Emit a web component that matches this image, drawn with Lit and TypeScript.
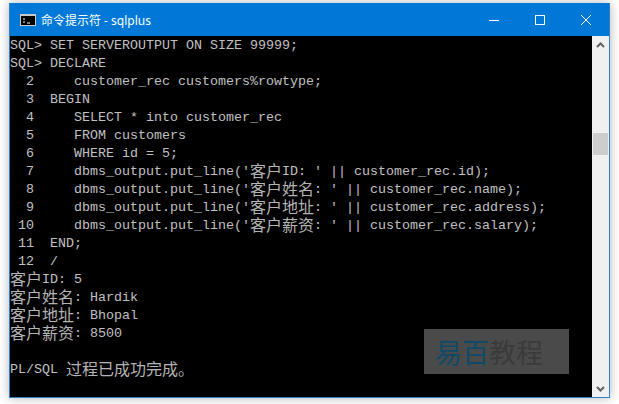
import { LitElement, html, css } from "lit";
import { customElement } from "lit/decorators.js";

const LINES = [
  "SQL> SET SERVEROUTPUT ON SIZE 99999;",
  "SQL> DECLARE",
  "  2     customer_rec customers%rowtype;",
  "  3  BEGIN",
  "  4     SELECT * into customer_rec",
  "  5     FROM customers",
  "  6     WHERE id = 5;",
  "  7     dbms_output.put_line('客户ID: ' || customer_rec.id);",
  "  8     dbms_output.put_line('客户姓名: ' || customer_rec.name);",
  "  9     dbms_output.put_line('客户地址: ' || customer_rec.address);",
  " 10     dbms_output.put_line('客户薪资: ' || customer_rec.salary);",
  " 11  END;",
  " 12  /",
  "客户ID: 5",
  "客户姓名: Hardik",
  "客户地址: Bhopal",
  "客户薪资: 8500",
  "",
  "PL/SQL 过程已成功完成。",
];

@customElement("app-root")
export class AppRoot extends LitElement {
  static styles = css`
    :host {
      display: block;
      width: 619px;
      height: 404px;
      background: #fff;
      overflow: hidden;
      padding: 3px 9px 6px;
      box-sizing: border-box;
    }
    .window {
      position: relative;
      height: 395px;
      width: 601px;
      border: 1px solid #2f7fc8;
      border-top: 0;
      box-sizing: border-box;
      display: flex;
      flex-direction: column;
      box-shadow: 0 0 10px rgba(0, 0, 0, 0.3);
    }
    .title {
      height: 33px;
      flex: none;
      background: #0078d7;
      color: #fff;
      display: flex;
      align-items: center;
      font: 12px "Noto Sans", "Noto Sans CJK SC", sans-serif;
    }
    .appicon {
      margin: 0 5px 0 10px;
      display: block;
    }
    .name {
      flex: 1;
    }
    .btn {
      width: 46px;
      height: 33px;
      display: flex;
      align-items: center;
      justify-content: center;
    }
    .body {
      flex: 1;
      display: flex;
      min-height: 0;
    }
    .console {
      flex: 1;
      background: #000;
      color: #c0c0c0;
      font: 13.33px/18px "Liberation Mono", "Noto Sans CJK SC", monospace;
      white-space: pre;
      overflow: hidden;
      padding-top: 1px;
    }
    .line {
      height: 18px;
    }
    .cjk {
      font: 16px/0 "Noto Sans CJK SC", sans-serif;
      color: #b4b4b4;
      vertical-align: -2px;
    }
    .scroll {
      width: 17px;
      flex: none;
      background: #f0f0f0;
      display: flex;
      flex-direction: column;
      align-items: center;
    }
    .arrow {
      height: 17px;
      flex: none;
      display: flex;
      align-items: center;
      justify-content: center;
    }
    .track {
      flex: 1;
      align-self: stretch;
      padding-top: 80px;
    }
    .thumb {
      height: 22px;
      margin: 0 1px;
      background: #cdcdcd;
    }
    .mark {
      position: absolute;
      left: 414px;
      top: 326px;
      width: 145px;
      height: 45px;
      background: #4a4a4a;
      font: 27px/45px "Noto Sans CJK SC", sans-serif;
      color: #3a3a3a;
      padding-left: 11px;
      box-sizing: border-box;
      white-space: nowrap;
    }
    .mark b {
      font-weight: 400;
      color: #0e4a68;
    }
  `;

  private renderLine(text: string) {
    const parts = text.split(/([\u3000-\u9fff\uff00-\uffef]+)/);
    return html`<div class="line">${parts.map((p, i) =>
      i % 2 ? html`<span class="cjk">${p}</span>` : p
    )}</div>`;
  }

  render() {
    return html`
      <div class="window">
        <div class="title">
          <svg class="appicon" width="16" height="12" viewBox="0 0 16 12">
            <rect x="0" y="0" width="16" height="12" fill="#c8c8c8" />
            <rect x="1" y="2" width="14" height="9" fill="#000" />
            <path d="M3 5h2M3 8h2M7 9h3" stroke="#fff" stroke-width="1" fill="none" />
          </svg>
          <div class="name">命令提示符 - sqlplus</div>
          <div class="btn">
            <svg width="10" height="10" viewBox="0 0 10 10"><path d="M0 5.5h10" stroke="#fff" /></svg>
          </div>
          <div class="btn">
            <svg width="10" height="10" viewBox="0 0 10 10"><rect x=".5" y=".5" width="9" height="9" fill="none" stroke="#fff" /></svg>
          </div>
          <div class="btn">
            <svg width="10" height="10" viewBox="0 0 10 10"><path d="M0 0l10 10M10 0L0 10" stroke="#fff" /></svg>
          </div>
        </div>
        <div class="body">
          <div class="console">${LINES.map((l) => this.renderLine(l))}</div>
          <div class="scroll">
            <div class="arrow">
              <svg width="9" height="6" viewBox="0 0 9 6"><path d="M1 5l3.5-3.5L8 5" fill="none" stroke="#606060" stroke-width="2" /></svg>
            </div>
            <div class="track"><div class="thumb"></div></div>
            <div class="arrow">
              <svg width="9" height="6" viewBox="0 0 9 6"><path d="M1 1l3.5 3.5L8 1" fill="none" stroke="#606060" stroke-width="2" /></svg>
            </div>
          </div>
        </div>
        <div class="mark"><b>易百</b>教程</div>
      </div>
    `;
  }
}
